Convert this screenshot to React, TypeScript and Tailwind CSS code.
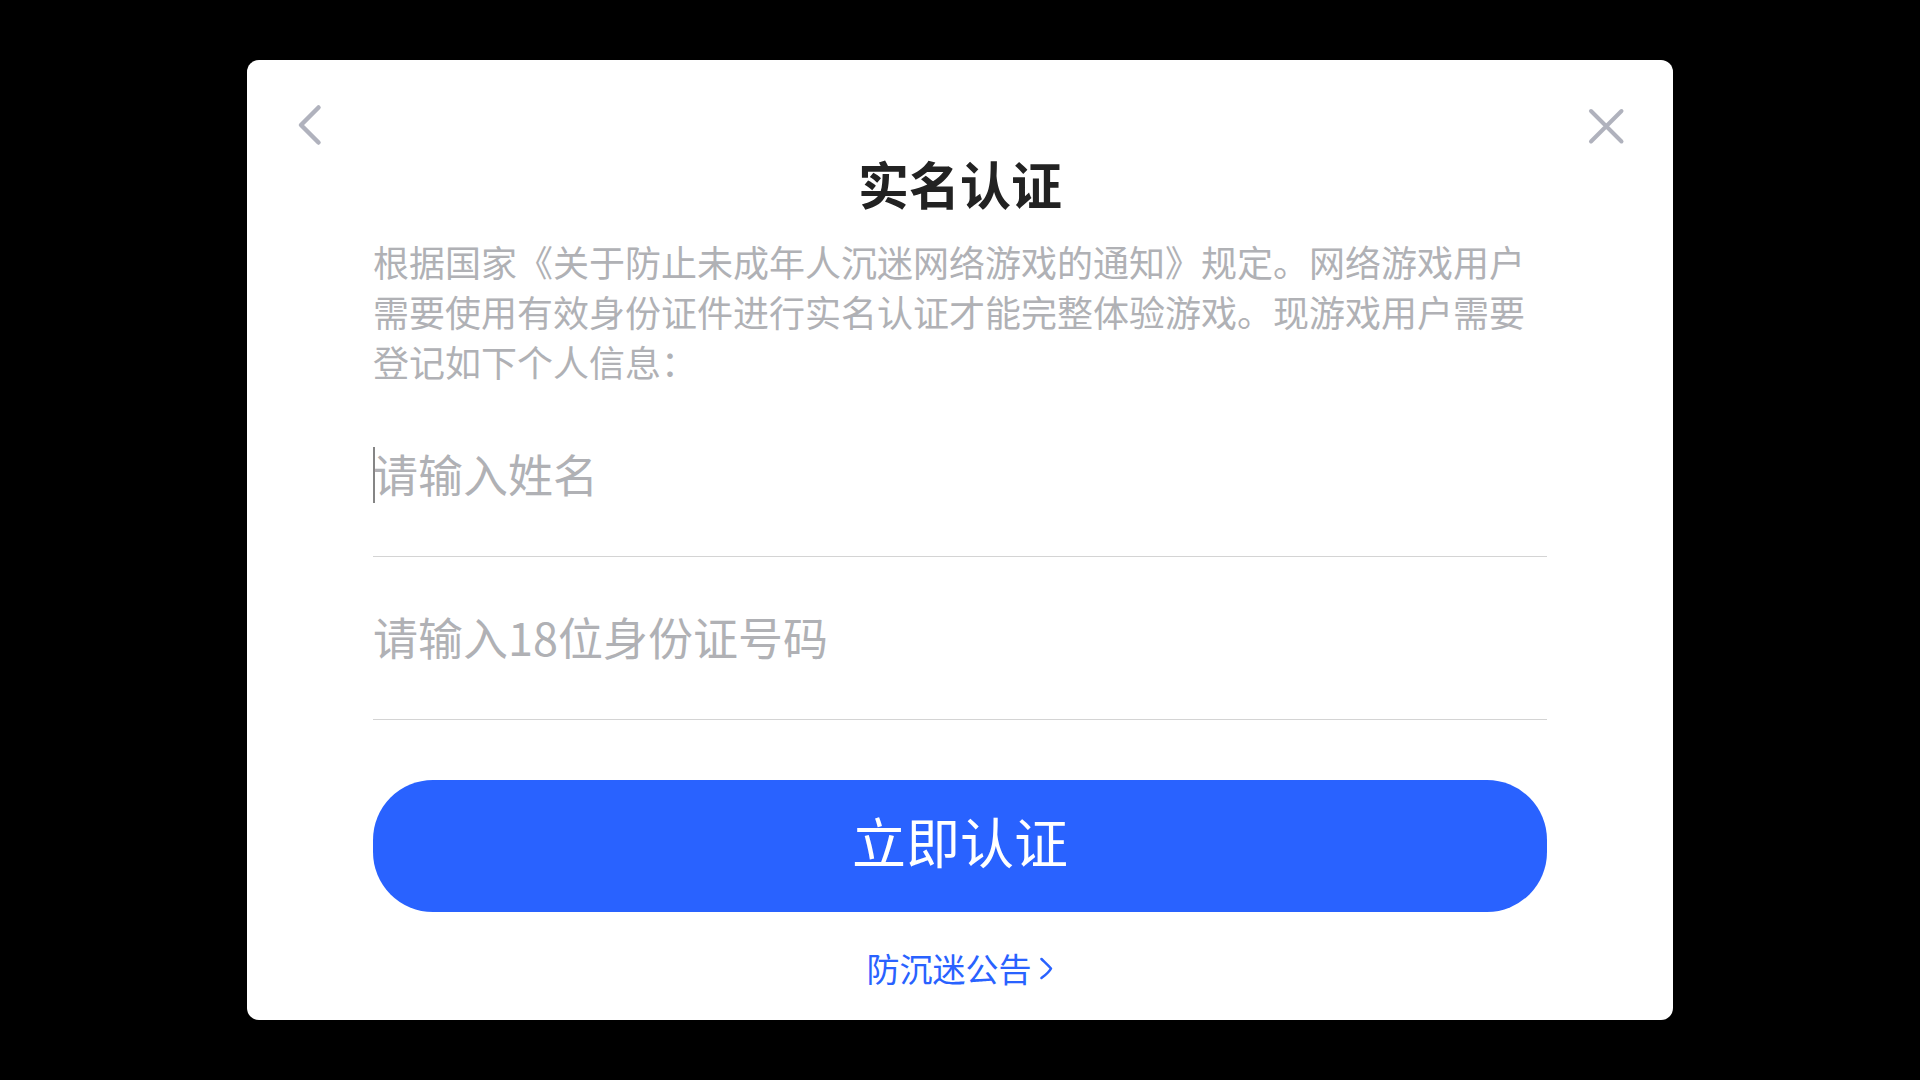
import { useState } from "react";

export default function App() {
  const [name, setName] = useState("");
  const [idNumber, setIdNumber] = useState("");

  return (
    <main className="flex min-h-screen items-center justify-center bg-black py-[60px] font-['Noto_Sans_CJK_SC',sans-serif] font-normal">
      <section
        role="dialog"
        aria-labelledby="dialog-title"
        className="w-full max-w-[1426px] rounded-xl bg-white pt-10 pb-8"
      >
        {/* ── Header ─────────────────────────────────────── */}
        <header className="flex items-center justify-between px-10 text-[#b0b2bd]">
          <button type="button" aria-label="返回" className="flex h-[50px] w-12 items-center justify-center">
            <svg viewBox="0 0 48 50" className="h-[50px] w-12" fill="none" stroke="currentColor" strokeWidth="4.5" strokeLinecap="round" strokeLinejoin="round">
              <path d="M31.5 7.5 14 25l17.500 17.500" />
            </svg>
          </button>
          <button type="button" aria-label="关闭" className="flex h-[50px] w-12 items-center justify-center">
            <svg viewBox="0 0 48 50" className="h-[50px] w-12" fill="none" stroke="currentColor" strokeWidth="4" strokeLinecap="round">
              <path d="m6 11 30.500 30.500M36.500 11 6 41.500" />
            </svg>
          </button>
        </header>

        <form className="flex flex-col px-[126px]" onSubmit={(e) => e.preventDefault()}>
          <h1 id="dialog-title" className="pb-1 text-center text-[51px] leading-[66px] font-bold text-[#222222]">
            实名认证
          </h1>

          <p className="mt-4 text-[36px] leading-[50px] text-[#b0b1b5]">
            根据国家《关于防止未成年人沉迷网络游戏的通知》规定。网络游戏用户需要使用有效身份证件进行实名认证才能完整体验游戏。现游戏用户需要登记如下个人信息：
          </p>

          {/* ── Fields ─────────────────────────────────────── */}
          <div className="mt-2">
            <Field label="请输入姓名" value={name} onChange={setName} active />
            <Field label="请输入18位身份证号码" value={idNumber} onChange={setIdNumber} />
          </div>

          <button
            type="submit"
            className="mt-[60px] h-[132px] rounded-[60px] bg-[#2962ff] pb-3 text-[54px] text-white"
          >
            立即认证
          </button>

          <a
            href="#notice"
            className="mt-9 flex items-center gap-2 self-center text-[33px] leading-10 text-[#2962ff]"
          >
            防沉迷公告
            <svg viewBox="0 0 14 24" className="h-6 w-[14px]" fill="none" stroke="currentColor" strokeWidth="2.5" strokeLinecap="round" strokeLinejoin="round">
              <path d="M1.500 3c3 3 6 5.500 9.500 9.500-2 4-5.500 6.500-9.500 9.500" />
            </svg>
          </a>
        </form>
      </section>
    </main>
  );
}

/* ── Sub-components ──────────────────────────────────── */

function Field({
  label,
  value,
  onChange,
  active = false,
}: {
  label: string;
  value: string;
  onChange: (value: string) => void;
  active?: boolean;
}) {
  return (
    <label className="relative flex items-center border-b border-[#d4d4d4]">
      {active && value === "" && (
        <span className="absolute left-0 h-14 w-[2px] bg-[#858585]" />
      )}
      <input
        type="text"
        aria-label={label}
        placeholder={label}
        value={value}
        onChange={(e) => onChange(e.target.value)}
        className="h-[162px] w-full bg-transparent pb-1 text-[45px] text-[#222222] outline-none placeholder:text-[#b0b1b5]"
      />
    </label>
  );
}
